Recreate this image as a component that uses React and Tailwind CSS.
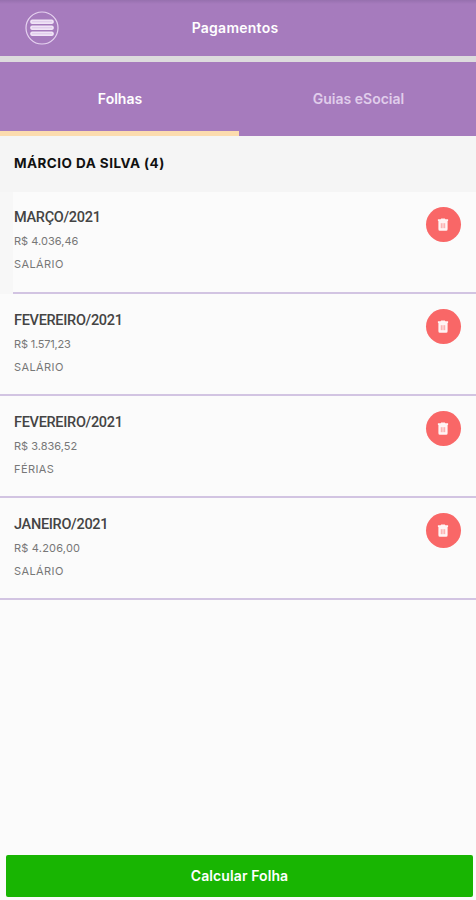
import { useState } from 'react';

const payments = [
  { id: 1, month: 'MARÇO/2021', amount: 'R$ 4.036,46', type: 'SALÁRIO', amountClass: 'tracking-[0.03px]' },
  { id: 2, month: 'FEVEREIRO/2021', amount: 'R$ 1.571,23', type: 'SALÁRIO', amountClass: 'tracking-[-0.2px]' },
  { id: 3, month: 'FEVEREIRO/2021', amount: 'R$ 3.836,52', type: 'FÉRIAS', amountClass: 'tracking-normal' },
  { id: 4, month: 'JANEIRO/2021', amount: 'R$ 4.206,00', type: 'SALÁRIO', amountClass: 'tracking-[0.2px]' },
];

const MenuIcon = () => (
  <svg className="h-[34px] w-[34px]" viewBox="0 0 34 34" fill="none">
    <circle cx="17" cy="17" r="16" stroke="#e6d3f0" strokeWidth="1.2" />
    <g fill="#f0e4f6">
      <rect x="5.3" y="8.5" width="23.4" height="4.6" rx="1.8" />
      <rect x="5.3" y="14.5" width="23.4" height="4.6" rx="1.8" />
      <rect x="5.3" y="20.5" width="23.4" height="4.6" rx="1.8" />
    </g>
    <path stroke="#dcc6ea" strokeWidth="1" d="M7 10.8h20M7 16.8h20M7 22.8h20" />
  </svg>
);

const TrashIcon = () => (
  <svg className="mr-px h-[13px] w-[12px]" viewBox="0 0 12 13">
    <path
      fill="#fff4f4"
      d="M4.2 0.5h3.6l0.6 0.8h2.7v1.6H0.9V1.3h2.7zM1.4 2.6h9.2v8.6a1.5 1.5 0 0 1-1.5 1.5H2.9a1.5 1.5 0 0 1-1.5-1.5z"
    />
    <path stroke="#fa8f8f" strokeWidth="0.8" d="M4.3 5.2v5M6 5.2v5M7.7 5.2v5" />
  </svg>
);

const PaymentItem = ({ payment, first }) => (
  <li className={first ? 'bg-[#f7f7f7] pl-[13px]' : ''}>
    <div
      className={`flex h-[102px] justify-between border-b-2 border-[#d2c4e2] bg-[#fbfbfb] pr-[15px] ${
        first ? 'pl-px' : 'pl-[14px]'
      }`}
    >
      <div className={first ? 'pt-[15px]' : 'pt-[16px]'}>
        <h3 className="font-[Roboto,sans-serif] text-[14.5px] leading-[22px] font-medium tracking-[-0.3px] text-[#444]">
          {payment.month}
        </h3>
        <p className={`mt-px text-[11px] leading-[22px] text-[#777] ${payment.amountClass}`}>
          {payment.amount}
        </p>
        <p className="mt-px text-[11px] leading-[22px] tracking-[0.4px] text-[#777]">{payment.type}</p>
      </div>
      <button
        type="button"
        aria-label="Excluir"
        className="mt-[15px] flex h-[35px] w-[35px] items-center justify-center rounded-full bg-[#f96767]"
      >
        <TrashIcon />
      </button>
    </div>
  </li>
);

const App = () => {
  const [activeTab, setActiveTab] = useState('folhas');

  return (
    <div className="flex h-[900px] w-full flex-col bg-[#fbfbfb] font-[Inter,sans-serif]">
      <header className="grid h-14 shrink-0 grid-cols-[1fr_auto_1fr] items-center bg-linear-to-b from-[#9670ae] from-0% to-[#a67bbd] to-[4px]">
        <button type="button" aria-label="Menu" className="ml-[25px] w-[34px]">
          <MenuIcon />
        </button>
        <h1 className="-ml-[6px] pb-px text-[14px] font-semibold tracking-[0.25px] text-white">Pagamentos</h1>
      </header>

      <nav className="grid h-20 shrink-0 grid-cols-[239px_1fr] border-t-[6px] border-[#dddbdd] bg-[#a67bbd] text-[14px]">
        <button
          type="button"
          onClick={() => setActiveTab('folhas')}
          className={`border-b-[5px] pt-[3px] pl-px font-semibold ${
            activeTab === 'folhas' ? 'border-[#fcdcae] text-white' : 'border-transparent text-[#e0cdeb]'
          }`}
        >
          Folhas
        </button>
        <button
          type="button"
          onClick={() => setActiveTab('guias')}
          className={`border-b-[5px] pt-[3px] pl-[2px] font-semibold ${
            activeTab === 'guias' ? 'border-[#fcdcae] text-white' : 'border-transparent text-[#e0cdeb]'
          }`}
        >
          Guias eSocial
        </button>
      </nav>

      <main className="flex-1">
        <h2 className="h-14 bg-[#f5f5f5] pt-[16px] pl-[14px] text-[13.5px] leading-[22px] font-bold tracking-[0.45px] text-[#111]">
          MÁRCIO DA SILVA (4)
        </h2>
        <ul>
          {payments.map((payment, index) => (
            <PaymentItem key={payment.id} payment={payment} first={index === 0} />
          ))}
        </ul>
      </main>

      <footer className="pr-[3px] pb-[3px] pl-[6px]">
        <button
          type="button"
          className="h-[42px] w-full rounded-[2px] bg-[#18b502] pb-[2px] text-[14px] font-semibold tracking-[0.1px] text-white"
        >
          Calcular Folha
        </button>
      </footer>
    </div>
  );
};

export default App;
